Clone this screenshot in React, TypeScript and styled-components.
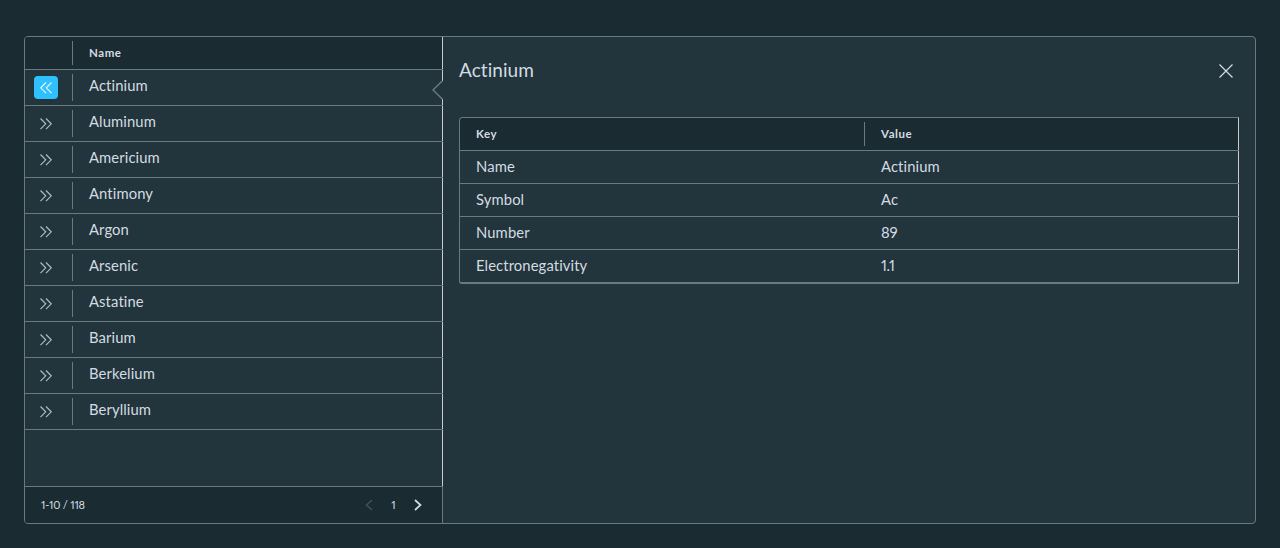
import React from "react";
import styled, { createGlobalStyle } from "styled-components";

const line = "#6a7a81";
const dark = "#1b2b32";
const panel = "#22343c";
const bright = "#cccccc";

const Global = createGlobalStyle`
  * { box-sizing: border-box; }
  body {
    margin: 0;
    background: ${dark};
    color: #d3dce1;
    font-family: Lato, "Open Sans", sans-serif;
    font-variant-numeric: proportional-nums;
    font-variant-ligatures: none;
  }
`;

const Page = styled.main`
  height: 548px;
  padding: 36px 24px 24px;
`;

const Datagrid = styled.section`
  display: flex;
  height: 488px;
  border: 1px solid ${line};
  border-radius: 4px;
  background: ${panel};
  overflow: hidden;
`;

const Master = styled.div`
  width: 418px;
  display: flex;
  flex-direction: column;
`;

const Rows = styled.div`
  flex: 1;
  border-right: 1px solid ${bright};
`;

const Header = styled.div`
  display: flex;
  height: 33px;
  margin-right: -1px;
  border-bottom: 1px solid ${line};
  box-shadow: inset -1px 0 ${bright};
  background: ${dark};
`;

const Row = styled.div`
  position: relative;
  display: flex;
  height: 36px;
  margin-right: -1px;
  border-bottom: 1px solid ${line};
`;

const CaretCell = styled.div<{ $header?: boolean }>`
  display: flex;
  width: 48px;
  padding: ${(p) => (p.$header ? "4px 0" : "6px 0 0 9px")};
  background: linear-gradient(${line}, ${line}) right ${(p) => (p.$header ? "4px / 1px 24px" : "4px / 1px 27px")} no-repeat;
`;

const CaretButton = styled.button<{ $open: boolean }>`
  display: flex;
  width: 24px;
  height: 23px;
  padding: 0;
  border: 0;
  border-radius: 4px;
  color: ${(p) => (p.$open ? "#e3f5fc" : "#adbbc4")};
  background: ${(p) => (p.$open ? "#2ec0ff" : "transparent")};
`;

const HeadText = styled.span`
  padding-left: 16px;
  font-size: 11.5px;
  font-weight: 700;
  line-height: 32px;
  letter-spacing: 0.55px;
`;

const CellText = styled.span<{ $numeric?: boolean }>`
  padding-left: 16px;
  font-size: 14.8px;
  line-height: 31px;
  letter-spacing: ${(p) => (p.$numeric ? "-0.3px" : "0.1px")};
`;

const Pointer = styled.svg`
  position: absolute;
  right: 0;
  top: 10px;
`;

const Footer = styled.footer`
  display: flex;
  align-items: center;
  height: 37px;
  padding: 0 20px 0 16px;
  border-top: 1px solid ${line};
  border-right: 1px solid ${line};
  background: ${dark};
  font-size: 11px;
  line-height: 12px;
`;

const Range = styled.span`
  letter-spacing: -0.2px;
`;

const Pager = styled.div`
  display: flex;
  align-items: center;
  margin-left: auto;
  gap: 18.5px;
`;

const Detail = styled.aside`
  flex: 1;
  padding: 0 16px;
`;

const DetailHeader = styled.header`
  display: flex;
  justify-content: space-between;
  height: 80px;
  padding: 20px 5px 0 0;
`;

const Title = styled.h1`
  margin: 0;
  font-size: 19px;
  font-weight: 400;
  line-height: 26px;
  letter-spacing: 0.05px;
`;

const CloseButton = styled.button`
  display: flex;
  width: 16px;
  height: 16px;
  margin-top: 6px;
  padding: 0;
  border: 0;
  background: none;
  color: #d3dce1;
`;

const KeyTable = styled.div`
  border: 1px solid ${line};
  border-right-color: ${bright};
  border-bottom-width: 2px;
  border-radius: 4px 0 0 3px;
`;

const KeyRow = styled.div<{ $head?: boolean }>`
  display: grid;
  grid-template-columns: 405px 1fr;
  height: 33px;
  margin-right: -1px;
  border-bottom: 1px solid ${line};
  background: ${(p) => (p.$head ? `linear-gradient(${line}, ${line}) 404px 4px / 1px 24px no-repeat, ${dark}` : "transparent")};
  box-shadow: ${(p) => (p.$head ? `inset -1px 0 ${bright}` : "none")};
  border-radius: ${(p) => (p.$head ? "3px 0 0 0" : "0")};
  &:last-child { height: 32px; border-bottom: 0; }
`;

const elements = ["Actinium", "Aluminum", "Americium", "Antimony", "Argon", "Arsenic", "Astatine", "Barium", "Berkelium", "Beryllium"];
const details = [["Name", "Actinium"], ["Symbol", "Ac"], ["Number", "89"], ["Electronegativity", "1.1"]];

const DoubleAngle = ({ left = false }: { left?: boolean }) => (
  <svg width="24" height="24" fill="none" stroke="currentColor" strokeWidth="1.2">
    <path d={left ? "M12 6.5L6.8 11.8l5.2 5.3M17.5 6.5l-5.2 5.3 5.2 5.3" : "M6.5 6.5l5.2 5.3-5.2 5.3M12 6.5l5.2 5.3-5.2 5.3"} />
  </svg>
);

const Angle = ({ left = false }: { left?: boolean }) => (
  <svg width="8" height="12" fill="none" stroke={left ? "#405159" : "#d3dce1"} strokeWidth={left ? 1.5 : 1.7}>
    <path d={left ? "M7 1L1.5 6 7 11" : "M1 1l5.5 5L1 11"} />
  </svg>
);

export default function App() {
  return (
    <Page>
      <Global />
      <Datagrid>
        <Master>
          <Rows>
            <Header><CaretCell $header /><HeadText>Name</HeadText></Header>
            {elements.map((name, i) => (
              <Row key={name}>
                <CaretCell>
                  <CaretButton $open={i === 0} aria-label={`Details for ${name}`}><DoubleAngle left={i === 0} /></CaretButton>
                </CaretCell>
                <CellText>{name}</CellText>
                {i === 0 && (
                  <Pointer width="11" height="20">
                    <path d="M11 0.5L1 10l10 9.5z" fill={panel} />
                    <path d="M10.5 0.7L1 10l9.5 9.3" fill="none" stroke={line} strokeWidth="1.4" />
                  </Pointer>
                )}
              </Row>
            ))}
          </Rows>
          <Footer>
            <Range>1-10 / 118</Range>
            <Pager><Angle left /><span>1</span><Angle /></Pager>
          </Footer>
        </Master>
        <Detail>
          <DetailHeader>
            <Title>Actinium</Title>
            <CloseButton aria-label="Close">
              <svg width="16" height="16" stroke="currentColor" strokeWidth="1.2"><path d="M1.5 1.5l13 13M14.5 1.5l-13 13" /></svg>
            </CloseButton>
          </DetailHeader>
          <KeyTable>
            <KeyRow $head><HeadText>Key</HeadText><HeadText>Value</HeadText></KeyRow>
            {details.map(([key, value]) => (
              <KeyRow key={key}><CellText>{key}</CellText><CellText $numeric={!isNaN(Number(value))}>{value}</CellText></KeyRow>
            ))}
          </KeyTable>
        </Detail>
      </Datagrid>
    </Page>
  );
}
